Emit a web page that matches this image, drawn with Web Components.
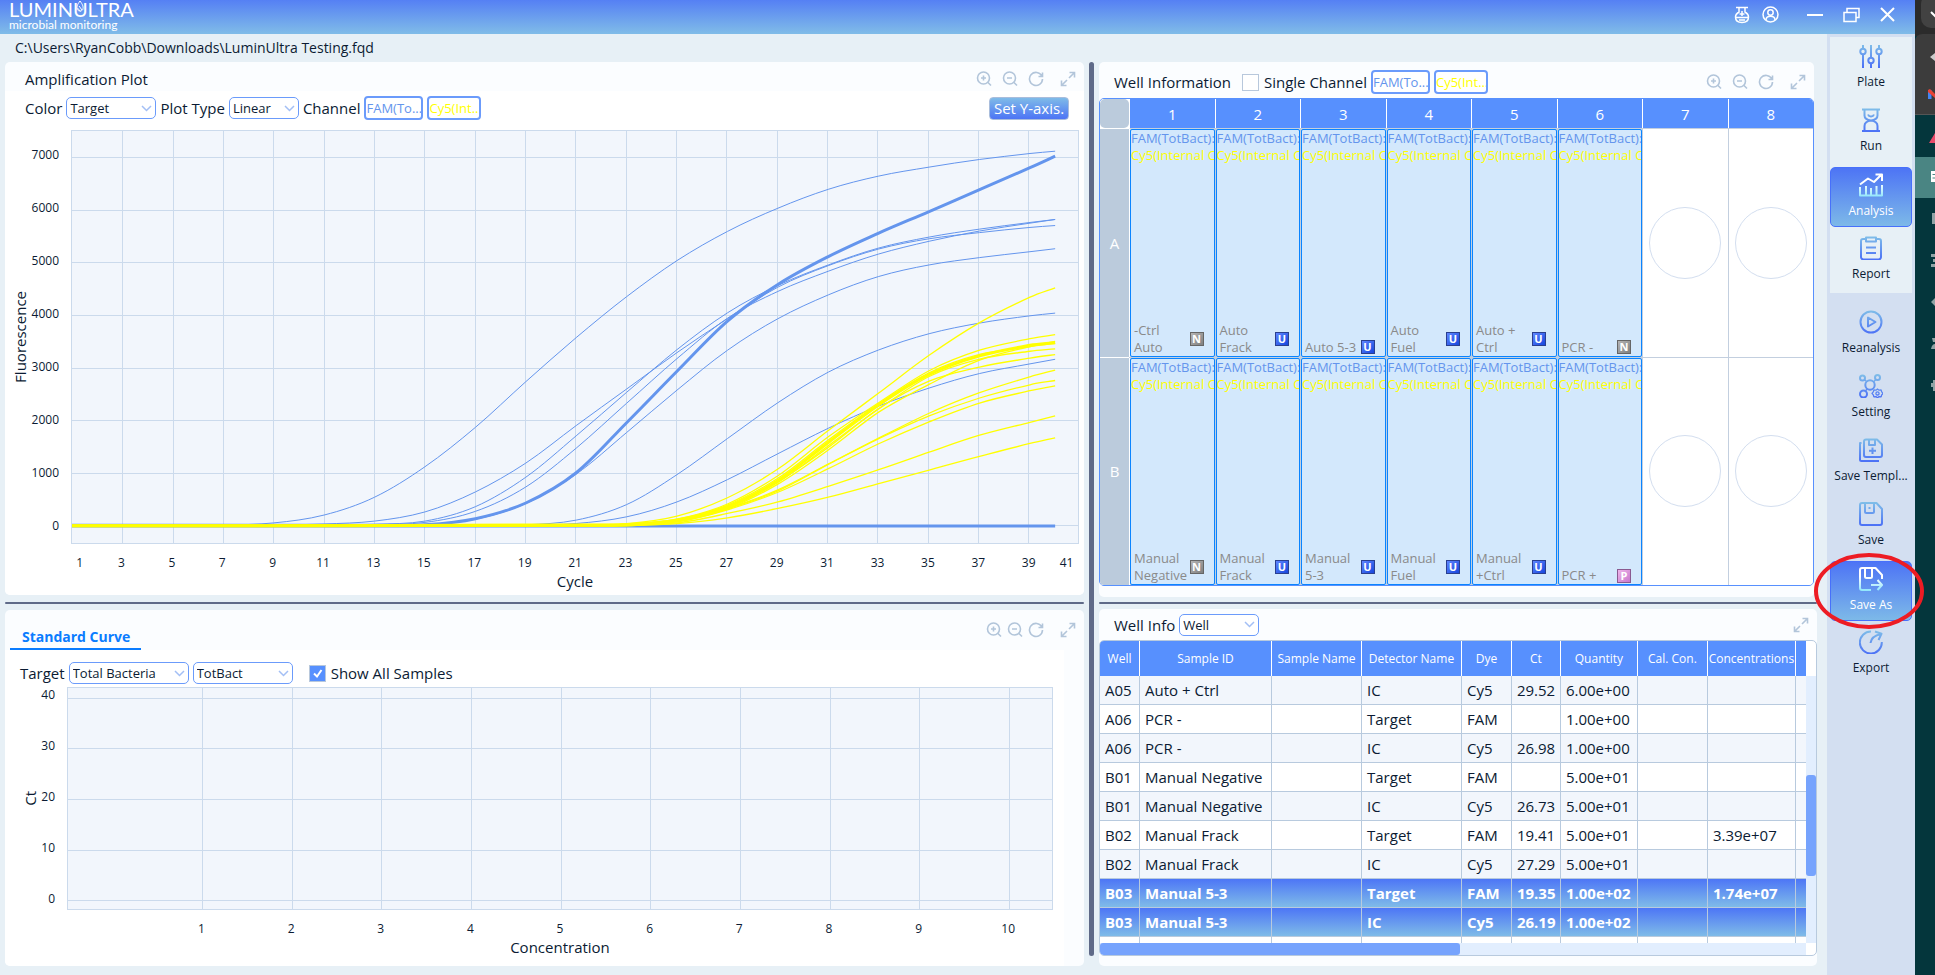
<!DOCTYPE html>
<html lang="en">
<head>
<meta charset="utf-8">
<title>LuminUltra Testing.fqd</title>
<style>
  html, body { margin: 0; height: 100%; }
  body {
    font-family: "Open Sans", "Noto Sans", sans-serif;
    font-size: 15px; line-height: 20px; color: #0b1b33;
    background: #e7f0f6; overflow: hidden;
  }
</style>
</head>
<body>
<qpcr-app></qpcr-app>

<script>
const define = (name, html, setup) => customElements.define(name, class extends HTMLElement {
  connectedCallback() {
    if (this.shadowRoot) return;
    const root = this.attachShadow({ mode: 'open' });
    const t = document.createElement('template');
    t.innerHTML = typeof html === 'function' ? html(this) : html;
    root.append(t.content.cloneNode(true));
    if (setup) setup(this, root);
  }
});

/* ---------- icons ---------- */
const ICONS = {
  zoomin: '<path d="M7.5 1a6 6 0 1 0 0 12a6 6 0 0 0 0-12M12 11.5l3 3M5 7h5M7.500 4.500v5"/>',
  zoomout: '<path d="M7.5 1a6 6 0 1 0 0 12a6 6 0 0 0 0-12M12 11.5l3 3M5 7h5"/>',
  refresh: '<path d="M13.800 5A6.500 6.500 0 1 0 14.500 8M14.500 1.500V5.500H10.500"/>',
  expand: '<path d="M9.500 1.500H14.500V6.500M14 2L9 7M6.500 14.500H1.500V9.500M2 14L7 9"/>',
};
define('tool-icon', el => `<style>
  :host{display:block;width:16px;height:16px}
  button{all:unset;display:block;cursor:pointer;width:16px;height:16px}
  svg{display:block;fill:none;stroke:#b2c5da;stroke-width:1.600}
</style><button aria-label="${el.getAttribute('name')}"><svg width="16" height="16" viewBox="0 0 16 16">${ICONS[el.getAttribute('name')]}</svg></button>`);

define('plot-tools', `<style>
  :host{display:flex;align-items:center;gap:var(--tool-gap,10px)}
  tool-icon:last-child{margin-left:var(--expand-gap,6px)}
</style><tool-icon name="zoomin"></tool-icon><tool-icon name="zoomout"></tool-icon><tool-icon name="refresh"></tool-icon><tool-icon name="expand"></tool-icon>`);

/* ---------- form controls ---------- */
define('pick-list', el => `<style>
  :host{display:flex;align-items:center;gap:4px}
  .box{display:grid;width:var(--w,90px)}
  .box>*{grid-area:1/1}
  select{appearance:none;box-sizing:border-box;width:100%;height:22px;margin:0;padding:0 20px 0 3px;border:1px solid #6b9bfb;border-radius:5px;background:#fff;color:#0b1b33;font:13px/18px "Open Sans",sans-serif}
  svg{justify-self:end;align-self:center;margin-right:4px;pointer-events:none;fill:none;stroke:#a3bff5;stroke-width:1.500}
</style>${el.getAttribute('label') ? `<label for="s">${el.getAttribute('label')}</label>` : ''}
<span class="box"><select id="s" ${el.getAttribute('label') ? '' : 'aria-label="Detector"'}><option>${el.getAttribute('value')}</option></select>
<svg width="11" height="7" viewBox="0 0 11 7"><path d="M1 1l4.500 4.500L10 1"/></svg></span>`);

define('check-box', el => `<style>
  :host{display:flex;align-items:center;gap:5px}
  input{appearance:none;box-sizing:border-box;width:17px;height:17px;margin:0;border:1px solid #b8c8dc;background:#fff}
  input:checked{background:#5790fe url('data:image/svg+xml,<svg xmlns="http://www.w3.org/2000/svg" viewBox="0 0 15 15"><path d="M4 7.500l3 3L11.500 4" fill="none" stroke="white" stroke-width="2"/></svg>')}
</style><input type="checkbox" id="c" ${el.hasAttribute('checked') ? 'checked' : ''}><label for="c">${el.getAttribute('label')}</label>`);

define('channel-button', `<style>
  :host{display:block}
  button{box-sizing:border-box;width:var(--w,59px);height:24px;margin:0;padding:0;border:2px solid #6b9bfb;border-radius:4px;background:#fff;color:var(--c,#6495ed);font:13px/18px "Open Sans",sans-serif;white-space:nowrap;overflow:hidden}
</style><button><slot></slot></button>`);

/* ---------- panel ---------- */
define('work-panel', `<style>
  :host{display:flex;flex-direction:column;min-width:0;min-height:0;background:#fbfdff;border-radius:5px;overflow:hidden}
</style><slot></slot>`);

/* ---------- charts ---------- */
const smooth = p => {
  let d = `M${p[0][0]} ${p[0][1]}`;
  for (let i = 0; i < p.length - 1; i++) {
    const a = p[i - 1] || p[i], b = p[i], c = p[i + 1], e = p[i + 2] || c;
    const m1 = (c[1] - a[1]) / (c[0] - a[0]), m2 = (e[1] - b[1]) / (e[0] - b[0]), h = (c[0] - b[0]) / 3;
    d += `C${(b[0] + h).toFixed(1)} ${(b[1] + h * m1).toFixed(1)} ${(c[0] - h).toFixed(1)} ${(c[1] - h * m2).toFixed(1)} ${c[0].toFixed(1)} ${c[1].toFixed(1)}`;
  }
  return d;
};
/* each run: colour, width, then [cycle, fluorescence] pairs */
const B = '#6495ed', Y = '#ffff00', T = 1.300;
const odd = (from, vals, end) => vals.map((v, i) => [from + 2 * i, v]).concat([[40, end]]);
const RUNS = [
  [B, 1, [[1, 15], [7, 20], ...odd(9, [60, 210, 550, 1130, 1880, 2750, 3590, 4370, 5057, 5613, 6055, 6415, 6668, 6838, 6983, 7097], 7141)]],
  [B, 1, [[1, 15], [9, 20], ...odd(11, [40, 95, 270, 650, 1200, 1915, 2610, 3305, 3950, 4551, 4962, 5278, 5473, 5590, 5690], 5725)]],
  [B, 1, [[1, 15], [11, 20], ...odd(13, [35, 95, 370, 930, 1719, 2547, 3362, 4063, 4583, 4975, 5297, 5505, 5657, 5783], 5840)]],
  [B, 1, [[1, 15], [11, 20], ...odd(13, [25, 70, 280, 745, 1485, 2340, 3190, 3960, 4470, 4855, 5183, 5425, 5620, 5771], 5840)]],
  [B, 1, [[1, 15], [13, 20], ...odd(15, [30, 130, 430, 990, 1782, 2590, 3350, 3950, 4404, 4754, 4975, 5114, 5227], 5284)]],
  [B, 1, [[1, 15], [17, 20], ...odd(19, [25, 114, 410, 980, 1668, 2350, 2932, 3355, 3665, 3867, 4006], 4057)]],
  [B, 1, [[1, 15], [19, 20], ...odd(21, [50, 177, 460, 885, 1378, 1864, 2287, 2629, 2907, 3090], 3178)]],
  [B, 3, [[1, 15], [13, 18], ...odd(15, [25, 140, 440, 1017, 1970, 2950, 3905, 4602, 5133, 5581, 5992, 6409, 6826], 7047)]],
  [B, 3, [[1, 0], [40, 0]]],
  [Y, 3, [[1, 5], [23, 20], [24.500, 80]]],
  [Y, 3, [[1, 5], [21, 15], ...odd(23, [25, 115, 367, 866, 1592, 2307, 2888, 3242, 3444], 3494)]],
  [Y, T, [[1, 5], [21, 15], ...odd(23, [45, 190, 540, 1087, 1820, 2534, 3254, 3874, 4360], 4539)]],
  [Y, T, [[1, 5], [21, 15], ...odd(23, [30, 130, 420, 960, 1700, 2350, 2960, 3350, 3570], 3646)]],
  [Y, T, [[1, 5], [21, 15], ...odd(23, [30, 120, 400, 910, 1640, 2330, 2920, 3270, 3420], 3480)]],
  [Y, T, [[1, 5], [21, 15], ...odd(23, [20, 100, 350, 830, 1530, 2230, 2850, 3180, 3330], 3374)]],
  [Y, T, [[1, 5], [21, 15], ...odd(23, [20, 90, 330, 800, 1450, 2170, 2700, 3160, 3420], 3520)]],
  [Y, T, [[1, 5], [21, 15], ...odd(23, [20, 110, 370, 850, 1500, 2240, 2760, 3030, 3200], 3267)]],
  [Y, T, [[1, 5], [21, 10], ...odd(23, [20, 90, 340, 690, 1182, 1675, 2149, 2540, 2844], 2970)]],
  [Y, T, [[1, 5], [21, 10], ...odd(23, [20, 95, 330, 670, 1175, 1665, 2098, 2439, 2692], 2774)]],
  [Y, T, [[1, 5], [21, 10], ...odd(23, [20, 80, 310, 645, 1093, 1567, 1984, 2344, 2578], 2673)]],
  [Y, T, [[1, 5], [21, 10], ...odd(23, [15, 60, 240, 461, 758, 1074, 1409, 1731, 1978], 2098)]],
  [Y, T, [[1, 5], [21, 10], ...odd(23, [12, 45, 158, 335, 550, 809, 1068, 1327, 1574], 1681)]],
];
const range = (n, f) => Array.from({ length: n }, (_, i) => f(i));
const CHARTS = {
  amplification: {
    w: 1008, h: 414, v: range(19, i => 51 + i * 50.430), hz: range(8, i => 27 + i * 52.800),
    y: range(8, i => (7 - i) * 1000), x: range(21, i => 2 * i + 1), yt: 'Fluorescence', xt: 'Cycle', cls: 'halfends',
    lines: RUNS.map(([c, w, p]) => `<path stroke="${c}" stroke-width="${w}" d="${smooth(p.map(([a, b]) => [(a - 1) * 25.260, 397 - b * 0.05275]))}"/>`).join('')
  },
  curve: {
    w: 986, h: 222, v: range(10, i => 135 + i * 89.800), hz: range(5, i => 10.500 + i * 50.750),
    y: [40, 30, 20, 10, 0], x: ['', 1, 2, 3, 4, 5, 6, 7, 8, 9, 10], yt: 'Ct', xt: 'Concentration', cls: '', lines: ''
  }
};
define('line-chart', el => {
  const c = CHARTS[el.getAttribute('kind')];
  return `<style>
  :host{display:grid;flex:1;min-height:0;grid-template-columns:20px var(--labels) 12px minmax(0,1fr);grid-template-rows:minmax(0,1fr) 28px 18px;padding:0 var(--right) var(--bottom) var(--lead)}
  .yt{writing-mode:vertical-rl;transform:rotate(180deg);place-self:center;line-height:20px;white-space:nowrap}
  .y{grid-column:2;grid-row:1;display:flex;flex-direction:column;margin:var(--over-top) 0 var(--over-bottom);font-size:12px;line-height:18px;text-align:right}
  .y span{flex:1;display:flex;align-items:center;justify-content:flex-end}
  .plot{grid-column:4;grid-row:1;width:100%;height:100%;box-sizing:border-box;background:#f2f6fc;border:1px solid #cbdaec;overflow:visible}
  .plot path{vector-effect:non-scaling-stroke;fill:none}
  .x{grid-column:4;grid-row:2;display:flex;padding-top:10px;font-size:12px;line-height:18px;text-align:center}
  .x span{flex:2 0 0;min-width:0}
  .halfends span:first-child{flex:1 0 0;text-indent:-8px}
  .halfends span:last-child{flex:1 0 0}
  .xt{grid-column:4;grid-row:3;text-align:center;line-height:18px}
</style>
<div class="yt">${c.yt}</div>
<div class="y">${c.y.map(v => `<span>${v}</span>`).join('')}</div>
<svg class="plot" viewBox="0 0 ${c.w} ${c.h}" preserveAspectRatio="none">
  <path shape-rendering="crispEdges" stroke="#cbdaec" d="${c.v.map(x => `M${x} 0V${c.h}`).join('')}${c.hz.map(y => `M0 ${y}H${c.w}`).join('')}"/>${c.lines}</svg>
<div class="x ${c.cls}">${c.x.map(v => `<span>${v}</span>`).join('')}</div>
<div class="xt">${c.xt}</div>`;
});

/* ---------- well plate ---------- */
const badge = t => ({
  N: ['#b4b4b4', '#808080', '#666'], U: ['#5f86ff', '#1746dc', '#2a3f8f'], P: ['#eeb4ea', '#c877cc', '#8a5a90']
})[t];
define('plate-well', el => {
  const t = el.getAttribute('type');
  if (!t) return `<style>:host{display:grid;place-items:center;background:#fff;min-width:0}i{width:86%;max-width:72px;aspect-ratio:1;box-sizing:border-box;border:1px solid #d3deef;border-radius:50%}</style><i></i>`;
  const [a, b, c] = badge(t);
  return `<style>
  :host{display:flex;flex-direction:column;justify-content:space-between;min-width:0;overflow:hidden;box-sizing:border-box;border:1px solid #0a84ff;border-radius:2px;background:#d3e8fc;font-size:13px;line-height:17px}
  .t{white-space:nowrap}.f{color:#6495ed}.c{color:#ffff00}
  .b{display:flex;align-items:center;padding:0 10px 0 3px;color:#8a8a8a;justify-content:space-between}
  .n{max-width:54px}
  b{flex:none;box-sizing:border-box;width:14px;height:14px;border:1px solid ${c};background:linear-gradient(135deg,${a},${b});color:#fff;font:bold 11px/12px "Open Sans",sans-serif;text-align:center}
</style><div class="t"><div class="f">FAM(TotBact):</div><div class="c">Cy5(Internal C</div></div>
<div class="b"><span class="n">${el.getAttribute('name')}</span><b>${t}</b></div>`;
});
const WELLS = [
  ['A', [['-Ctrl<br>Auto', 'N'], ['Auto<br>Frack', 'U'], ['Auto 5-3', 'U'], ['Auto<br>Fuel', 'U'], ['Auto +<br>Ctrl', 'U'], ['PCR -', 'N']]],
  ['B', [['Manual<br>Negative', 'N'], ['Manual<br>Frack', 'U'], ['Manual<br>5-3', 'U'], ['Manual<br>Fuel', 'U'], ['Manual<br>+Ctrl', 'U'], ['PCR +', 'P']]]
];
define('well-plate', `<style>
  :host{display:grid;flex:1;min-height:0;grid-template-columns:29px repeat(8,minmax(0,1fr));grid-template-rows:29px repeat(2,minmax(0,1fr));gap:1px;background:#c3cfdf;border:1px solid #5790fe;border-radius:5px;overflow:hidden;margin-bottom:11px}
  .h,.r{display:grid;place-items:center;color:#fff;background:#5790fe;box-shadow:1px 0 #fff}
  .r{background:#bbcbdc;box-shadow:0 1px #fff,1px 0 #fff}
  .k{background:#bbcbdc;border-radius:5px;box-shadow:0 0 0 3px #fff}
</style><div class="k"></div>${range(8, i => `<div class="h">${i + 1}</div>`).join('')}
${WELLS.map(([r, ws]) => `<div class="r">${r}</div>${ws.map(([n, t]) => `<plate-well name="${n}" type="${t}"></plate-well>`).join('')}<plate-well></plate-well><plate-well></plate-well>`).join('')}`);

/* ---------- result table ---------- */
const HEAD = ['Well', 'Sample ID', 'Sample Name', 'Detector Name', 'Dye', 'Ct', 'Quantity', 'Cal. Con.', 'Concentrations', ''];
const WIDTHS = [40, 132, 90, 100, 50, 49, 77, 70, 88, 10];
const ROWS = [
  ['A05', 'Auto + Ctrl', '', 'IC', 'Cy5', '29.52', '6.00e+00', '', '', ''],
  ['A06', 'PCR -', '', 'Target', 'FAM', '', '1.00e+00', '', '', ''],
  ['A06', 'PCR -', '', 'IC', 'Cy5', '26.98', '1.00e+00', '', '', ''],
  ['B01', 'Manual Negative', '', 'Target', 'FAM', '', '5.00e+01', '', '', ''],
  ['B01', 'Manual Negative', '', 'IC', 'Cy5', '26.73', '5.00e+01', '', '', ''],
  ['B02', 'Manual Frack', '', 'Target', 'FAM', '19.41', '5.00e+01', '', '3.39e+07', ''],
  ['B02', 'Manual Frack', '', 'IC', 'Cy5', '27.29', '5.00e+01', '', '', ''],
  ['B03', 'Manual 5-3', '', 'Target', 'FAM', '19.35', '1.00e+02', '', '1.74e+07', ''],
  ['B03', 'Manual 5-3', '', 'IC', 'Cy5', '26.19', '1.00e+02', '', '', ''],
  ['', '', '', '', '', '', '', '', '', '']
];
define('result-table', `<style>
  :host{display:grid;flex:1;min-height:0;grid-template-columns:minmax(0,1fr) 10px;grid-template-rows:minmax(0,1fr) 12px;border:1px solid #b8cade;border-radius:5px;overflow:hidden;margin-bottom:10px;background:#fff}
  .view{overflow:hidden;min-height:0}
  table{border-collapse:separate;border-spacing:0;table-layout:fixed;width:100%}
  th,td{box-sizing:border-box;padding:0;white-space:nowrap;text-align:left;border-right:1px solid #b8cade}
  th{height:35px;background:#5790fe;color:#fff;font-weight:400;font-size:12px;line-height:18px;text-align:center;border-right-color:#fff}
  td{height:29px;padding-left:5px;border-bottom:1px solid #b8cade;background:#fff;font-size:15px;line-height:20px}
  th:last-child,td:last-child{border-right:0}
  tr:nth-child(odd) td{background:#f2f6fc}
  tr.sel td{background:linear-gradient(#4d76f6,#7fbbe8);color:#fff;font-weight:700}
  .v{background:#e2eefe;margin-top:35px;display:flex;flex-direction:column}
  .v i{flex:0 0 37%}.v b{flex:0 0 38%;border-radius:3px;background:#76a3fd}
  .h{background:#e2eefe}.h b{display:block;width:51%;height:12px;border-radius:3px;background:#76a3fd}
</style>
<div class="view"><table><colgroup>${WIDTHS.map(w => `<col style="width:${(w / 7.060).toFixed(2)}%">`).join('')}</colgroup>
<thead><tr>${HEAD.map(h => `<th>${h}</th>`).join('')}</tr></thead>
<tbody>${ROWS.map(r => `<tr${r[0] === 'B03' ? ' class="sel"' : ''}>${r.map(c => `<td>${c}</td>`).join('')}</tr>`).join('')}</tbody></table></div>
<div class="v"><i></i><b></b></div><div class="h"><b></b></div>`);

/* ---------- side navigation ---------- */
const NAV = {
  Plate: '<path d="M4 1v4M4 10v14M12 1v12.500M12 19v5M20 1v4M20 10v14"/><circle cx="4" cy="7.500" r="2.700"/><circle cx="12" cy="16.500" r="2.700"/><circle cx="20" cy="7.500" r="2.700"/>',
  Run: '<path d="M3 1.500h18M3 23h18M5.500 2v5.500c0 3 3 4.500 6.500 5c3.500-.5 6.500-2 6.500-5V2M5.500 22.500v-4.500c0-3.500 3-5 6.500-5.500c3.500.5 6.500 2 6.500 5.500v4.500M9 6.500c1 2.500 5 2.500 6 0"/>',
  Analysis: '<path d="M1 11.500l8-6l6 3.500L22 2M16.500 1.500H23V8M1 14v8.500h22V12M7 22v-9M12 22v-7M17.500 22v-9"/>',
  Report: '<path d="M7 3H4a2 2 0 0 0-2 2v16a2.500 2.500 0 0 0 2.500 2.500h15A2.500 2.500 0 0 0 22 21V5a2 2 0 0 0-2-2h-3M7 1.500h10v4H7zM7 11.500h10M7 17h10"/>',
  Reanalysis: '<circle cx="12" cy="12" r="10.500"/><path d="M9 7.500v9l7.500-4.500z"/>',
  Setting: '<circle cx="11" cy="11" r="4.700"/><circle cx="3.500" cy="4" r="2.500"/><circle cx="18.500" cy="3.500" r="2.500"/><circle cx="4.500" cy="20" r="3.500"/><path d="M5.500 5.500l2 2M16.800 5.500L14.500 8M8 15l-1.500 2M18.500 15l1.600 1.200l2-.2l.6 1.900l1.300 1.500l-1.300 1.500l-.6 1.900l-2-.2l-1.600 1.200l-1.600-1.200l-2 .2l-.6-1.900L13 19.400l1.300-1.500l.6-1.900l2 .2z" stroke-width="1.300"/><circle cx="18.500" cy="19.400" r="1.600" stroke-width="1.300"/>',
  'Save Templ...': '<path d="M5 3.500a2 2 0 0 1 2-2h11l5 5v10.500a2 2 0 0 1-2 2H7a2 2 0 0 1-2-2zM2.500 5H1v16.500a1.500 1.500 0 0 0 1.500 1.500H20M10 2v5h6V2M13.500 9.500v6.500M10 12.800h7"/>',
  Save: '<path d="M1 3a2 2 0 0 1 2-2h14.500L23 7v14a2 2 0 0 1-2 2H3a2 2 0 0 1-2-2zM6 1.500V9.500a1.500 1.500 0 0 0 1.500 1.500h6a1.500 1.500 0 0 0 1.500-1.500V1.500M10.500 5v2"/>',
  'Save As': '<path d="M12 23H3a2 2 0 0 1-2-2V3a2 2 0 0 1 2-2h13.500L23 8v4M6 1.500V9.500a1.500 1.500 0 0 0 1.500 1.500h4a1.500 1.500 0 0 0 1.500-1.500V1.500M12 18h11M18.500 13l4.500 5l-4.500 5"/>',
  Export: '<path d="M12 1.500A11 11 0 1 0 22.800 12M11.500 13C12 8.500 15 5.500 22 4M16 1.500l6.500 2.300L19.500 10"/>'
};
define('nav-item', el => {
  const n = el.getAttribute('name'), on = el.hasAttribute('active');
  return `<style>
  :host{display:block;height:60px;align-self:${on ? 'center' : 'start'};position:relative}
  button{box-sizing:border-box;width:100%;height:60px;margin:0;padding:${on ? 5 : 7}px 0 0;display:flex;flex-direction:column;align-items:center;gap:5px;border:${on ? '1px solid #4770fb' : '0'};border-radius:5px;background:${on ? 'linear-gradient(#4d74f5,#7db9e8)' : 'none'};color:${on ? '#fff' : '#0b1b33'};font:12px/18px "Open Sans",sans-serif;white-space:nowrap}
  svg.i{display:block;flex:none;fill:none;stroke:url(#g);stroke-width:2;stroke-linejoin:round}
  .ring{position:absolute;left:-17px;top:-9px;width:112px;height:78px;fill:none;stroke:#ed1c24;stroke-width:4;pointer-events:none}
</style><button><svg class="i" width="24" height="24" viewBox="0 0 24 24"><defs><linearGradient id="g" gradientUnits="userSpaceOnUse" x1="0" y1="0" x2="0" y2="24"><stop stop-color="${on ? '#fff' : '#80bfe8'}"/><stop offset="${on ? '.4' : '0'}" stop-color="${on ? '#fff' : '#80bfe8'}"/><stop offset="1" stop-color="${on ? '#8fe6fb' : '#4b70f6'}"/></linearGradient></defs>${NAV[n]}</svg><span>${n}</span></button>
${el.hasAttribute('marked') ? '<svg class="ring" viewBox="0 0 112 78"><ellipse cx="56" cy="39" rx="53" ry="36"/></svg>' : ''}`;
});
define('side-nav', `<style>
  :host{display:flex;flex-direction:column;gap:10px;background:#d3dff1;padding:3px 3px 0;position:relative;z-index:2}
  div{display:grid;grid-auto-rows:64px}
  .top{background:#e7f0f6}
</style><div class="top"><nav-item name="Plate"></nav-item><nav-item name="Run"></nav-item><nav-item name="Analysis" active></nav-item><nav-item name="Report"></nav-item></div>
<div><nav-item name="Reanalysis"></nav-item><nav-item name="Setting"></nav-item><nav-item name="Save Templ..."></nav-item><nav-item name="Save"></nav-item><nav-item name="Save As" active marked></nav-item><nav-item name="Export"></nav-item></div>`);

/* ---------- title bar ---------- */
define('title-bar', `<style>
  :host{display:flex;justify-content:space-between;box-sizing:border-box;height:34px;padding:0 20px 0 9px;background:linear-gradient(#5580f4,#80bce8);overflow:hidden;color:#fff}
  .brand{display:flex;flex-direction:column;justify-content:flex-end;font-family:Lato,sans-serif}
  .n{position:relative;font-size:20px;line-height:18px;font-weight:400}
  .n svg{position:absolute;left:67px;top:1px}
  .s{font-size:12px;line-height:14px;padding-bottom:2px}
  .ic{display:flex;align-items:center;padding-bottom:5px}
  button{all:unset;display:block;margin-left:20px}
  button.a{margin-left:12px}
  svg{display:block;fill:none;stroke:#fff;stroke-width:1.500}
</style>
<div class="brand"><div class="n">LUMINULTRA<svg width="8" height="13" viewBox="0 0 8 13"><path d="M4 0c3 4 3.500 6 2.800 8.500c-1 2-4.500 2-5.500 0C.5 6 1 4 4 0M3 5l3 4M1.500 7l3 3.500" stroke-width="1"/></svg></div><div class="s">microbial monitoring</div></div>
<div class="ic">
<button class="a" aria-label="Laboratory"><svg width="16" height="18" viewBox="0 0 16 18" stroke-width="2"><path d="M2 1.500h12M5 2v4C2.500 7.500 1.500 9 1.500 11C1.500 15 4 16.500 8 16.500s6.500-1.500 6.500-5.500c0-2-1-3.500-3.500-5V2M8 5v5M5.500 8h5M2 11.500h12M5 14h6"/></svg></button>
<button class="a" aria-label="Account"><svg width="17" height="17" viewBox="0 0 17 17"><circle cx="8.500" cy="8.500" r="7.500"/><circle cx="8.500" cy="6.500" r="2.700"/><path d="M4 14c0-5 9-5 9 0"/></svg></button>
<button style="margin-left:28px" aria-label="Minimize"><svg width="16" height="16" viewBox="0 0 16 16"><path d="M0 8h16" stroke-width="2"/></svg></button>
<button aria-label="Restore"><svg width="17" height="16" viewBox="0 0 17 16"><path d="M1 5.500h12v9H1zM4 5V1.500h12v9h-3"/></svg></button>
<button aria-label="Close"><svg width="15" height="15" viewBox="0 0 15 15"><path d="M1 1l13 13M14 1L1 14" stroke-width="2"/></svg></button>
</div>`);

/* ---------- sliver of the windows behind ---------- */
define('desktop-edge', `<style>
  :host{display:block;background:#04363c;overflow:hidden}
  svg{display:block}
</style><svg width="20" height="420" viewBox="0 0 20 420">
<path fill="#2b2b2b" d="M0 0h20v36H0z"/><rect x="6" y="-6" width="30" height="34" rx="10" fill="#424242"/>
<path fill="#3c3c3c" d="M0 115V42q0-8 8-8h12v81z"/><path d="M0 114.500h20" stroke="#555"/>
<path d="M16 12l5 5" stroke="#fff" stroke-width="2"/><path d="M15 57l5-4v8z" fill="#ccc"/>
<path d="M13 90h3.500v9H13z" fill="#4285f4"/><path d="M13 90l2-1l5 5v4l-7-6z" fill="#ea4335"/>
<path d="M14 143l6-10v10z" fill="#e84a6a"/>
<path d="M0 157h20v41H0z" fill="#4a8583"/><path d="M16 171h4v11h-4z" fill="#fff"/><path d="M17.500 174.500h3M17.500 178h3" stroke="#4a8583"/>
<path d="M17 213h3v11h-3zM16 254h4v3h-4zM18 259h2v3h-2zM16 264h4v3h-4zM16 302l4-4v8zM16 349q1-5 4-5v5zM17 338h3v4h-2zM16 383h2v-3h2v11h-2v-4h-2z" fill="#8fa3a5"/>
</svg>`);

/* ---------- application ---------- */
define('qpcr-app', `<style>
  :host{display:grid;height:100vh;grid-template-columns:minmax(0,1fr) 20px}
  .win{display:grid;grid-template-rows:34px minmax(0,1fr);min-height:0}
  .body{display:grid;grid-template-columns:minmax(0,1fr) 88px;min-height:0}
  main{display:flex;flex-direction:column;min-height:0;min-width:0}
  .path{height:28px;line-height:27px;padding-left:15px;font-size:14px}
  .work{flex:1;min-height:0;display:grid;grid-template-columns:minmax(0,1079fr) 5px minmax(0,718fr);column-gap:5px;padding:0 10px 9px 5px}
  .split{background:#5f6a88;border-radius:3px;margin-bottom:10px}
  .col{display:grid;min-height:0;min-width:0}
  .l{grid-template-rows:minmax(0,533fr) 15px minmax(0,356fr)}
  .r{grid-template-rows:minmax(0,535fr) 12px minmax(0,357fr)}
  .bar{align-self:center;height:2px;background:#5f6a88;border-radius:1px}
  .r work-panel:first-child{margin-right:3px}
  h2{margin:0;font-size:15px;line-height:20px;font-weight:400}
  .hd,.row{display:flex;align-items:center;flex:none;box-sizing:border-box}
  .hd plot-tools,.hd>tool-icon{margin-left:auto}
  .h1{height:29px;padding:5px 8px 0 20px}
  .row{background:#fff;gap:4px}
  .c1{height:39px;padding:0 15px 5px 20px}
  .c1 .y{box-sizing:border-box;margin:0 0 0 auto;height:23px;width:80px;padding:0;border:1px solid #a9bddc;border-radius:4px;background:linear-gradient(#7fbbe8,#4d74f5);color:#fff;font:15px/20px "Open Sans",sans-serif;white-space:nowrap}
  .amp{background:#fff;--lead:5px;--labels:29px;--right:5px;--bottom:5px;--over-top:-1px;--over-bottom:-8px}
  .h2{height:40px;padding:0 8px 0 5px;--tool-gap:5px;--expand-gap:11px}
  .tab{all:unset;box-sizing:border-box;align-self:stretch;width:131px;padding:15px 0 0 12px;border-bottom:2px solid #0a7cff;color:#0a7cff;font-weight:700;line-height:20px;font-size:14px;white-space:nowrap}
  .c2{height:37px;padding:9px 0 0 15px;margin-right:20px}
  .c2 check-box{margin-left:12px}
  .cur{background:#fff;margin-right:20px;--lead:15px;--labels:15px;--right:11px;--bottom:10px;--over-top:-17px;--over-bottom:-14px}
  .h3{height:36px;padding:4px 8px 0 15px;gap:4px}
  .h3 check-box{margin-left:7px}
  .h4{height:31px;padding:0 8px 0 15px}
</style>
<div class="win">
  <title-bar></title-bar>
  <div class="body">
    <main>
      <div class="path">C:\\Users\\RyanCobb\\Downloads\\LuminUltra Testing.fqd</div>
      <div class="work">
        <div class="col l">
          <work-panel>
            <div class="hd h1"><h2>Amplification Plot</h2><plot-tools></plot-tools></div>
            <div class="row c1"><pick-list label="Color" value="Target"></pick-list><pick-list label="Plot Type" value="Linear" style="--w:70px"></pick-list><span>Channel</span><channel-button>FAM(To...</channel-button><channel-button style="--w:54px;--c:#ffff00">Cy5(Int...</channel-button><button class="y">Set Y-axis.</button></div>
            <line-chart class="amp" kind="amplification"></line-chart>
          </work-panel>
          <div class="bar"></div>
          <work-panel>
            <div class="hd h2"><button class="tab">Standard Curve</button><plot-tools></plot-tools></div>
            <div class="row c2"><pick-list label="Target" value="Total Bacteria" style="--w:120px"></pick-list><pick-list value="TotBact" style="--w:100px"></pick-list><check-box label="Show All Samples" checked></check-box></div>
            <line-chart class="cur" kind="curve"></line-chart>
          </work-panel>
        </div>
        <div class="split"></div>
        <div class="col r">
          <work-panel>
            <div class="hd h3"><h2>Well Information</h2><check-box label="Single Channel"></check-box><channel-button>FAM(To...</channel-button><channel-button style="--w:54px;--c:#ffff00">Cy5(Int...</channel-button><plot-tools></plot-tools></div>
            <well-plate></well-plate>
          </work-panel>
          <div class="bar"></div>
          <work-panel>
            <div class="hd h4"><pick-list label="Well Info" value="Well" style="--w:80px"></pick-list><tool-icon name="expand"></tool-icon></div>
            <result-table></result-table>
          </work-panel>
        </div>
      </div>
    </main>
    <side-nav></side-nav>
  </div>
</div>
<desktop-edge></desktop-edge>`);
</script>
</body>
</html>
